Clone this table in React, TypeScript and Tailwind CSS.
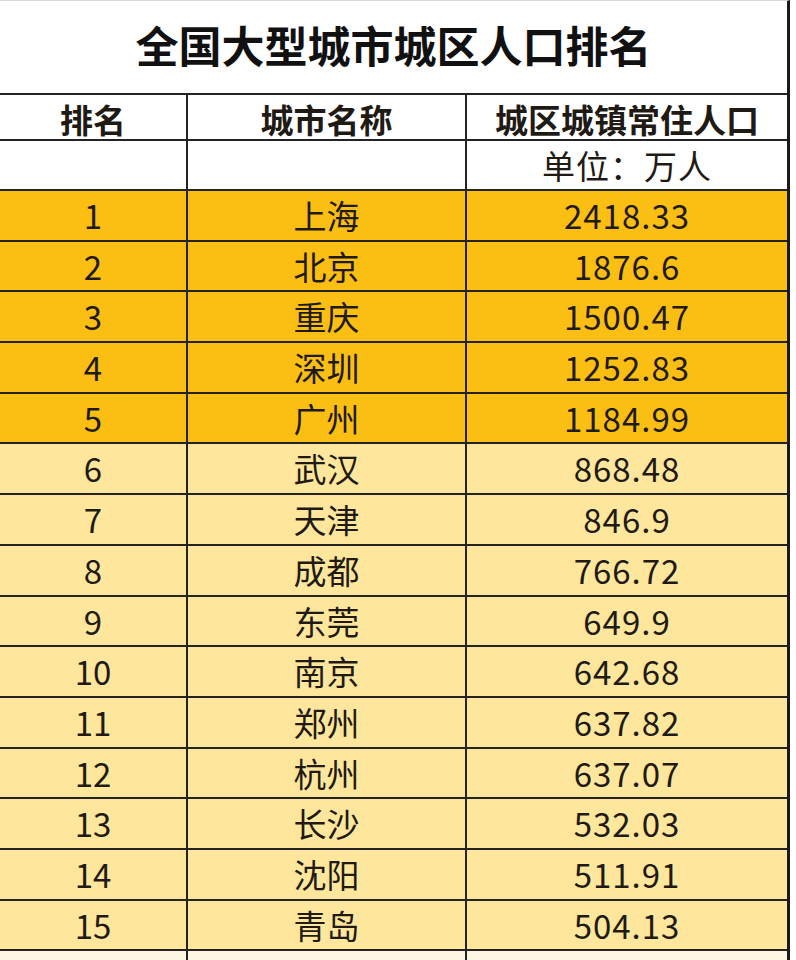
import React from 'react';

const rows = [
  ['1', '上海', '2418.33'],
  ['2', '北京', '1876.6'],
  ['3', '重庆', '1500.47'],
  ['4', '深圳', '1252.83'],
  ['5', '广州', '1184.99'],
  ['6', '武汉', '868.48'],
  ['7', '天津', '846.9'],
  ['8', '成都', '766.72'],
  ['9', '东莞', '649.9'],
  ['10', '南京', '642.68'],
  ['11', '郑州', '637.82'],
  ['12', '杭州', '637.07'],
  ['13', '长沙', '532.03'],
  ['14', '沈阳', '511.91'],
  ['15', '青岛', '504.13'],
];

const font = { fontFamily: '"Noto Sans CJK SC", "Noto Sans", sans-serif' };

function Row({ cells, bg, bold = false, h }: { cells: string[]; bg: string; bold?: boolean; h: string }) {
  return (
    <div className={`grid grid-cols-[188px_279px_1fr] border-b-2 border-[#232323] ${bg} ${h}`}>
      {cells.map((c, i) => (
        <div
          key={i}
          className={`flex items-center justify-center text-[#1f1a14] ${i < 2 ? 'border-r-2 border-[#232323]' : ''} ${
            bold ? 'font-bold text-[33px]' : 'text-[33px]'
          } ${i === 2 && !bold ? 'tracking-[1px]' : ''}`}
        >
          {c}
        </div>
      ))}
    </div>
  );
}

export default function App() {
  return (
    <div className="w-[796px] h-[960px] bg-white overflow-hidden" style={font}>
      <div className="w-[790px] border-r-[3px] border-t border-t-[#d8d8d8] border-r-[#1a1a1a]">
        {/* Title */}
        <div className="h-[94px] flex items-center justify-center pb-[6px] border-b-2 border-[#232323]">
          <h1 className="text-[43px] font-bold text-[#111] leading-none">全国大型城市城区人口排名</h1>
        </div>

        {/* Header */}
        <Row cells={['排名', '城市名称', '城区城镇常住人口']} bg="bg-white" bold h="h-[46px]" />
        <Row cells={['', '', '单位：万人']} bg="bg-white" h="h-[50px]" />

        {/* Data */}
        {rows.map((r, i) => (
          <Row key={r[0]} cells={r} bg={i < 5 ? 'bg-[#fbbf14]' : 'bg-[#fee79c]'} h="h-[50.7px]" />
        ))}

        {/* cut-off row */}
        <Row cells={['', '', '']} bg="bg-[#fcf6e2]" h="h-[50px]" />
      </div>
    </div>
  );
}
